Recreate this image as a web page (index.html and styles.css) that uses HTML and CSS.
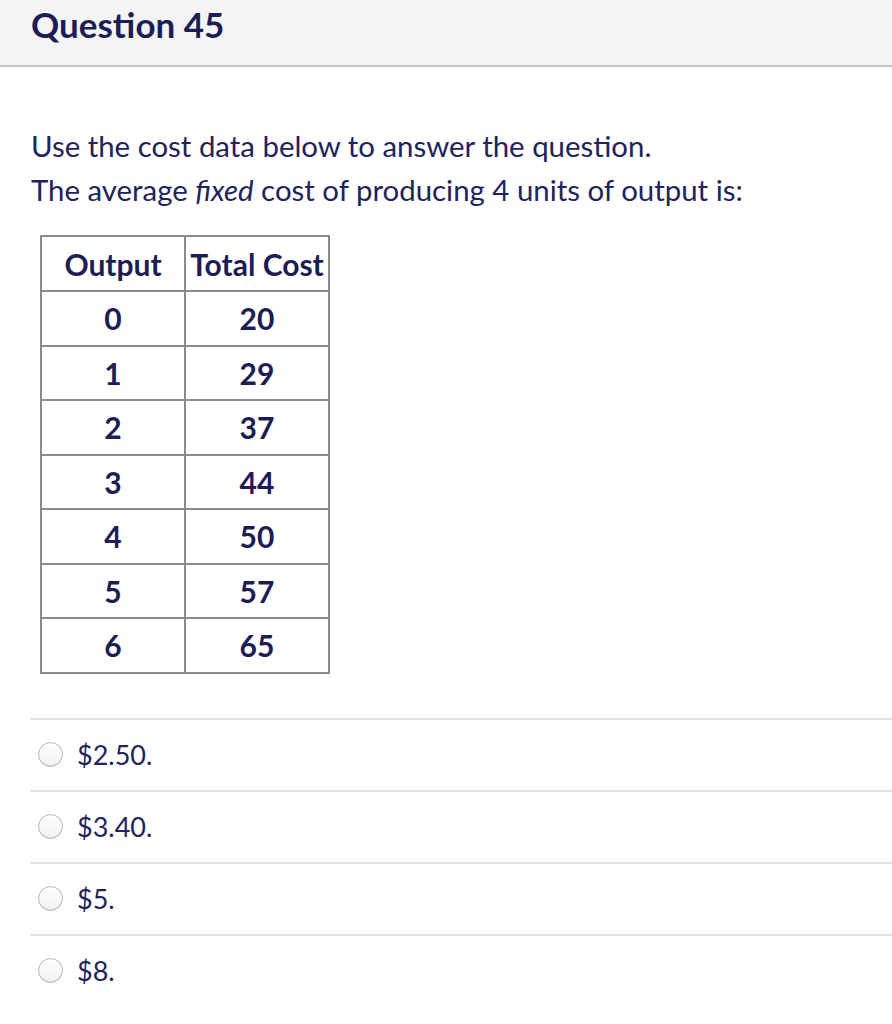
FILE: index.html
```html
<!DOCTYPE html>
<html>
<head>
<meta charset="utf-8">
<link rel="stylesheet" href="styles.css">
</head>
<body>
<div class="page">
  <div class="header"><h1 class="title">Question 45</h1></div>
  <div class="body">
    <p class="text">Use the cost data below to answer the question.</p>
    <p class="text">The average <em>fixed</em> cost of producing 4 units of output is:</p>
    <table class="data">
      <tr><th>Output</th><th>Total Cost</th></tr>
      <tr><td>0</td><td>20</td></tr>
      <tr><td>1</td><td>29</td></tr>
      <tr><td>2</td><td>37</td></tr>
      <tr><td>3</td><td>44</td></tr>
      <tr><td>4</td><td>50</td></tr>
      <tr><td>5</td><td>57</td></tr>
      <tr><td>6</td><td>65</td></tr>
    </table>
  </div>
  <div class="answers">
    <div class="answer"><span class="radio"></span><span class="label">$2.50.</span></div>
    <div class="answer"><span class="radio"></span><span class="label">$3.40.</span></div>
    <div class="answer"><span class="radio"></span><span class="label">$5.</span></div>
    <div class="answer"><span class="radio"></span><span class="label">$8.</span></div>
  </div>
</div>
</body>
</html>
```

FILE: styles.css
```css
html, body {
  margin: 0;
  padding: 0;
  background: #ffffff;
}
.page {
  width: 892px;
  font-family: Lato, "Liberation Sans", sans-serif;
  color: #22235a;
}
.header {
  height: 65px;
  background: #f4f4f4;
  border-bottom: 2px solid #c4c4c4;
  display: flex;
  align-items: center;
  padding-left: 31px;
}
.title {
  margin: 0;
  font-size: 35px;
  font-weight: 700;
  color: #1c1d55;
  line-height: 1;
  position: relative;
  top: -8px;
}
.body {
  padding: 57px 0 0 31px;
}
.text {
  margin: 0;
  font-size: 29.4px;
  line-height: 44px;
}
.text em {
  font-style: italic;
}
.data {
  margin: 23px 0 0 9px;
  border-collapse: collapse;
  border: 2px solid #3a3a3a;
}
.data th, .data td {
  border: 2px solid #8a8a8a;
  font-weight: 700;
  font-size: 30px;
  text-align: center;
  padding: 0;
  height: 52.5px;
  color: #1c1d55;
}
.data th {
  height: 53px;
}
.data tr > *:first-child {
  width: 142px;
}
.data tr > *:last-child {
  width: 142px;
  white-space: nowrap;
}
.answers {
  margin: 44px 0 0 30px;
}
.answer {
  border-top: 2px solid #e2e2e2;
  height: 70px;
  display: flex;
  align-items: center;
}
.radio {
  width: 23px;
  height: 23px;
  border-radius: 50%;
  border: 1px solid #b5b5b5;
  background: linear-gradient(#ffffff, #f2f2f2);
  box-shadow: inset 0 -1px 1px rgba(0,0,0,0.08);
  margin-left: 8px;
  margin-right: 14px;
  flex: none;
}
.label {
  font-size: 27px;
  color: #22235a;
}
```
